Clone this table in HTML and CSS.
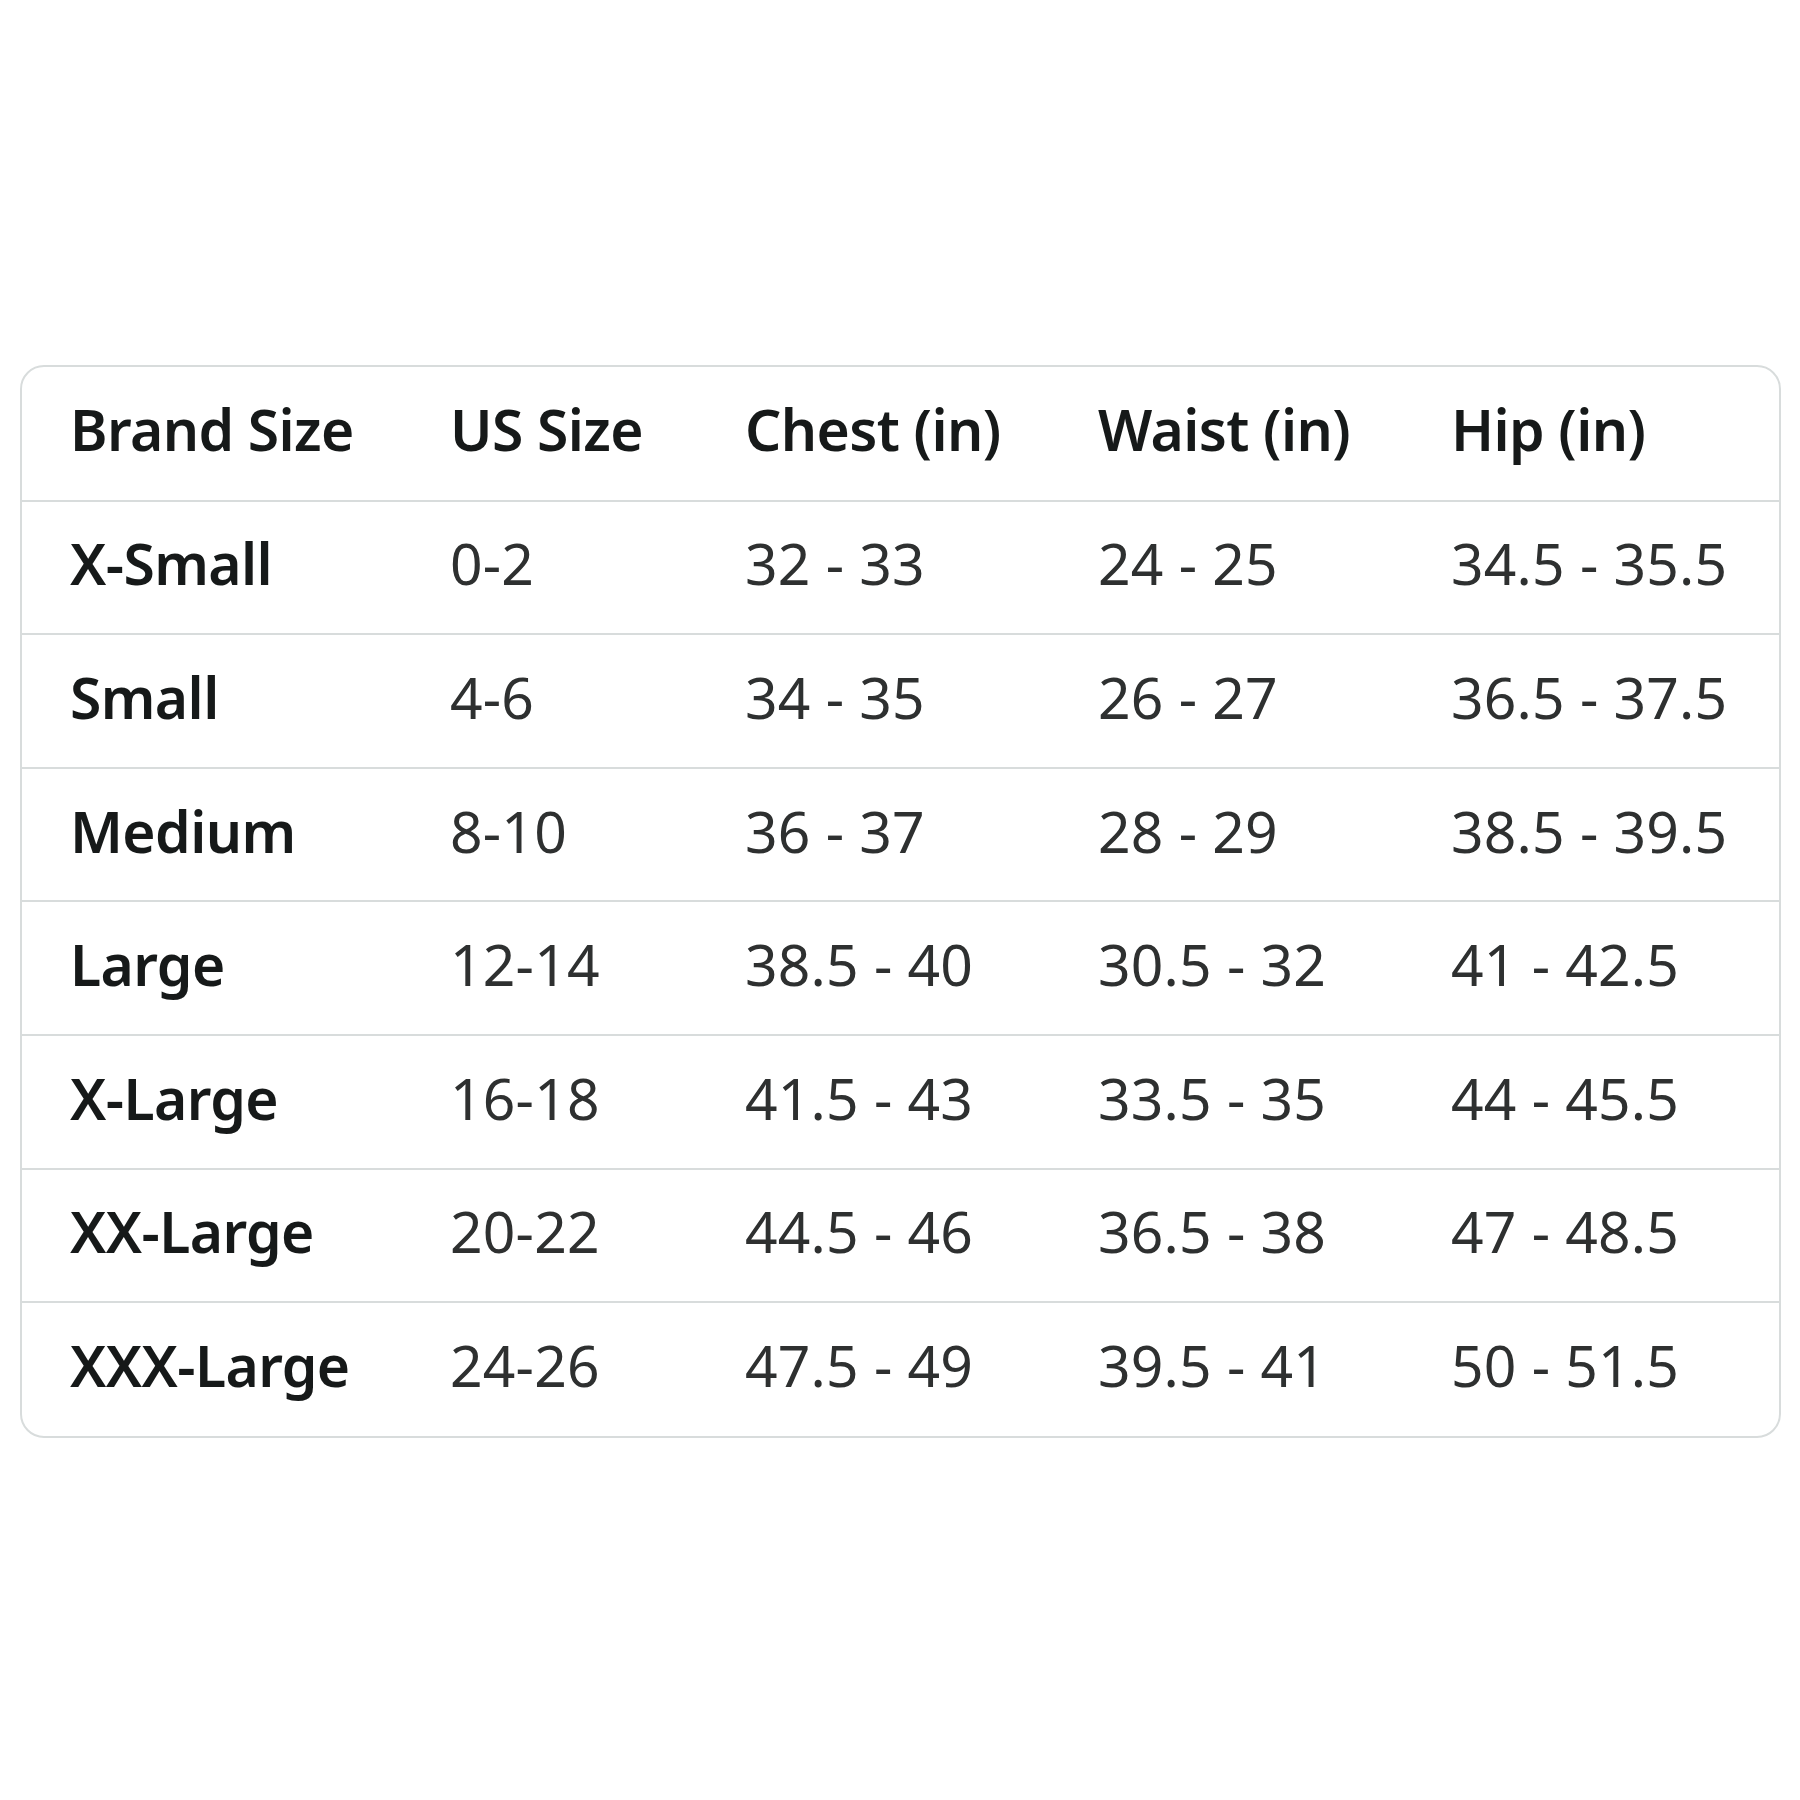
FILE: index.html
```html
<!DOCTYPE html>
<html lang="en">
<head>
<meta charset="utf-8">
<title>Size Chart</title>
<link rel="stylesheet" href="styles.css">
</head>
<body>
<div class="chart">
  <table class="size-table">
    <colgroup>
      <col class="c1"><col class="c2"><col class="c3"><col class="c4"><col class="c5">
    </colgroup>
    <thead>
      <tr><th>Brand Size</th><th>US Size</th><th>Chest (in)</th><th>Waist (in)</th><th>Hip (in)</th></tr>
    </thead>
    <tbody>
      <tr><th>X-Small</th><td>0-2</td><td>32 - 33</td><td>24 - 25</td><td>34.5 - 35.5</td></tr>
      <tr><th>Small</th><td>4-6</td><td>34 - 35</td><td>26 - 27</td><td>36.5 - 37.5</td></tr>
      <tr><th>Medium</th><td>8-10</td><td>36 - 37</td><td>28 - 29</td><td>38.5 - 39.5</td></tr>
      <tr><th>Large</th><td>12-14</td><td>38.5 - 40</td><td>30.5 - 32</td><td>41 - 42.5</td></tr>
      <tr><th>X-Large</th><td>16-18</td><td>41.5 - 43</td><td>33.5 - 35</td><td>44 - 45.5</td></tr>
      <tr><th>XX-Large</th><td>20-22</td><td>44.5 - 46</td><td>36.5 - 38</td><td>47 - 48.5</td></tr>
      <tr><th>XXX-Large</th><td>24-26</td><td>47.5 - 49</td><td>39.5 - 41</td><td>50 - 51.5</td></tr>
    </tbody>
  </table>
</div>
</body>
</html>
```
FILE: styles.css
```css
html, body {
  margin: 0;
  padding: 0;
  background: #ffffff;
}

body {
  font-family: "Noto Sans", "Open Sans", sans-serif;
  color: #0f1111;
}

.chart {
  box-sizing: border-box;
  width: 1761px;
  margin: 365px 0 0 20px;
  border: 2px solid #d8dcdc;
  border-radius: 24px;
  overflow: hidden;
}

.size-table {
  width: 100%;
  table-layout: fixed;
  border-collapse: collapse;
  border-spacing: 0;
}

.c1 { width: 380px; }
.c2 { width: 295px; }
.c3 { width: 353px; }
.c4 { width: 353px; }
.c5 { width: auto; }

.size-table th,
.size-table td {
  height: 133.6px;
  padding: 0 0 7px 48px;
  text-align: left;
  vertical-align: middle;
  font-size: 57px;
  line-height: 1;
  white-space: nowrap;
  box-sizing: border-box;
}

.size-table th {
  font-weight: 600;
  letter-spacing: -0.6px;
  color: #161919;
}

.size-table td {
  font-weight: 400;
  color: #2e3030;
  letter-spacing: 0.2px;
}

.size-table tr {
  border-bottom: 2px solid #d8dcdc;
}

.size-table tbody tr:last-child {
  border-bottom: none;
}
```
